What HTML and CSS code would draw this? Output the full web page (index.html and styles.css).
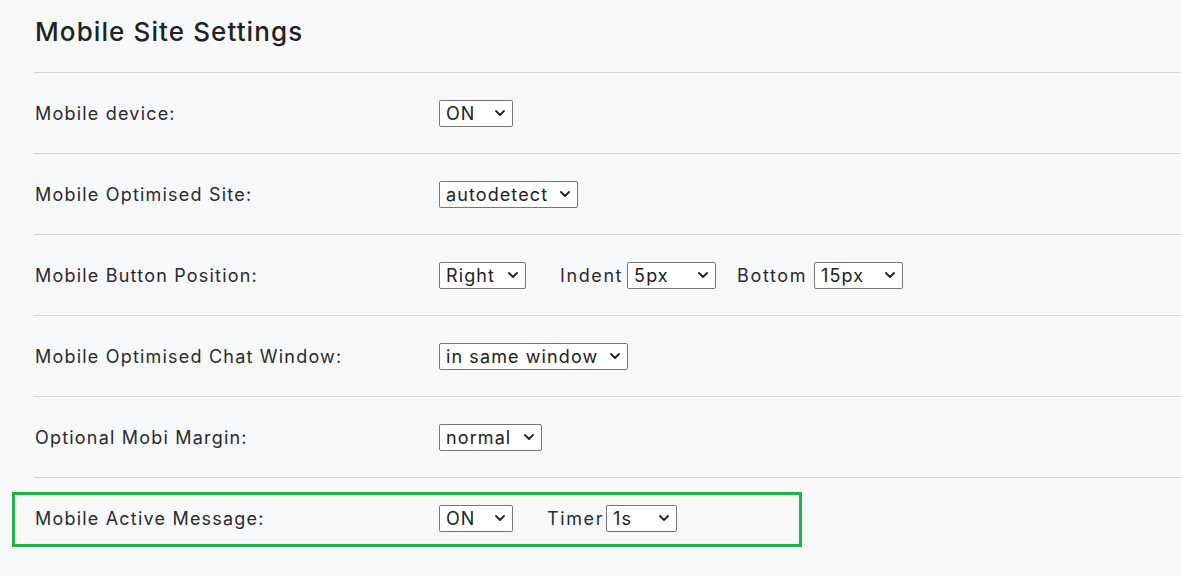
FILE: index.html
```html
<!DOCTYPE html>
<html>
<head>
<meta charset="utf-8">
<link rel="stylesheet" href="styles.css">
</head>
<body>
<div class="page">
  <h1 class="title">Mobile Site Settings</h1>
  <div class="row">
    <div class="label">Mobile device:</div>
    <div class="controls">
      <span class="sel w-on"><span class="val">ON</span><svg class="chev" viewBox="0 0 10 6"><path d="M1 1l4 4 4-4"/></svg></span>
    </div>
  </div>
  <div class="row">
    <div class="label">Mobile Optimised Site:</div>
    <div class="controls">
      <span class="sel w-auto"><span class="val">autodetect</span><svg class="chev" viewBox="0 0 10 6"><path d="M1 1l4 4 4-4"/></svg></span>
    </div>
  </div>
  <div class="row">
    <div class="label">Mobile Button Position:</div>
    <div class="controls">
      <span class="sel w-right"><span class="val">Right</span><svg class="chev" viewBox="0 0 10 6"><path d="M1 1l4 4 4-4"/></svg></span>
      <span class="sublabel sub-indent">Indent</span>
      <span class="sel w-px"><span class="val">5px</span><svg class="chev" viewBox="0 0 10 6"><path d="M1 1l4 4 4-4"/></svg></span>
      <span class="sublabel sub-bottom">Bottom</span>
      <span class="sel w-px"><span class="val">15px</span><svg class="chev" viewBox="0 0 10 6"><path d="M1 1l4 4 4-4"/></svg></span>
    </div>
  </div>
  <div class="row">
    <div class="label">Mobile Optimised Chat Window:</div>
    <div class="controls">
      <span class="sel w-window"><span class="val">in same window</span><svg class="chev" viewBox="0 0 10 6"><path d="M1 1l4 4 4-4"/></svg></span>
    </div>
  </div>
  <div class="row">
    <div class="label">Optional Mobi Margin:</div>
    <div class="controls">
      <span class="sel w-normal"><span class="val">normal</span><svg class="chev" viewBox="0 0 10 6"><path d="M1 1l4 4 4-4"/></svg></span>
    </div>
  </div>
  <div class="row row-last highlight">
    <div class="label">Mobile Active Message:</div>
    <div class="controls">
      <span class="sel w-on"><span class="val">ON</span><svg class="chev" viewBox="0 0 10 6"><path d="M1 1l4 4 4-4"/></svg></span>
      <span class="sublabel sub-timer">Timer</span>
      <span class="sel w-timer"><span class="val">1s</span><svg class="chev" viewBox="0 0 10 6"><path d="M1 1l4 4 4-4"/></svg></span>
    </div>
  </div>
</div>
</body>
</html>
```
FILE: styles.css
```css
html, body {
  margin: 0;
  padding: 0;
  background: #f7f8fa;
}
body {
  font-family: Inter, "DejaVu Sans", sans-serif;
  color: #2b2b2b;
  width: 1181px;
  height: 576px;
  overflow: hidden;
}
.page {
  margin-left: 34px;
}
.title {
  margin: 0;
  height: 73px;
  box-sizing: border-box;
  padding-top: 16px;
  padding-left: 1px;
  font-size: 26px;
  font-weight: 500;
  line-height: 32px;
  letter-spacing: 1.1px;
  color: #222;
  border-bottom: 1px solid #d4d4d4;
}
.row {
  display: flex;
  align-items: center;
  height: 80px;
  border-bottom: 1px solid #d4d4d4;
}
.row-last {
  border-bottom: none;
}
.label {
  width: 404px;
  padding-left: 1px;
  font-size: 18px;
  letter-spacing: 1.2px;
  color: #2b2b2b;
}
.controls {
  display: flex;
  align-items: center;
}
.sel {
  display: inline-flex;
  align-items: center;
  justify-content: space-between;
  box-sizing: border-box;
  height: 27px;
  padding: 0 7px 0 6px;
  background: #fff;
  border: 1px solid #767676;
  border-radius: 2px;
  font-size: 18px;
  letter-spacing: 1.1px;
  color: #222;
}
.val {
  white-space: nowrap;
}
.chev {
  width: 10px;
  height: 6px;
  margin-left: 8px;
  flex: none;
}
.chev path {
  fill: none;
  stroke: #222;
  stroke-width: 1.8;
  stroke-linecap: round;
  stroke-linejoin: round;
}
.w-on { width: 74px; }
.w-auto { width: 139px; }
.w-right { width: 87px; }
.w-px { width: 89px; }
.w-window { width: 189px; }
.w-normal { width: 103px; }
.w-timer { width: 71px; }
.sublabel {
  font-size: 18px;
  letter-spacing: 1.6px;
  color: #2b2b2b;
  margin-right: 4px;
}
.sub-indent { margin-left: 34px; }
.sub-bottom { margin-left: 21px; margin-right: 7px; }
.sub-timer { margin-left: 34px; margin-right: 2px; }
.highlight {
  position: relative;
}
.highlight::before {
  content: "";
  position: absolute;
  left: -22px;
  top: 14px;
  width: 790px;
  height: 55px;
  box-sizing: border-box;
  border: 3px solid #22b14c;
}
```
